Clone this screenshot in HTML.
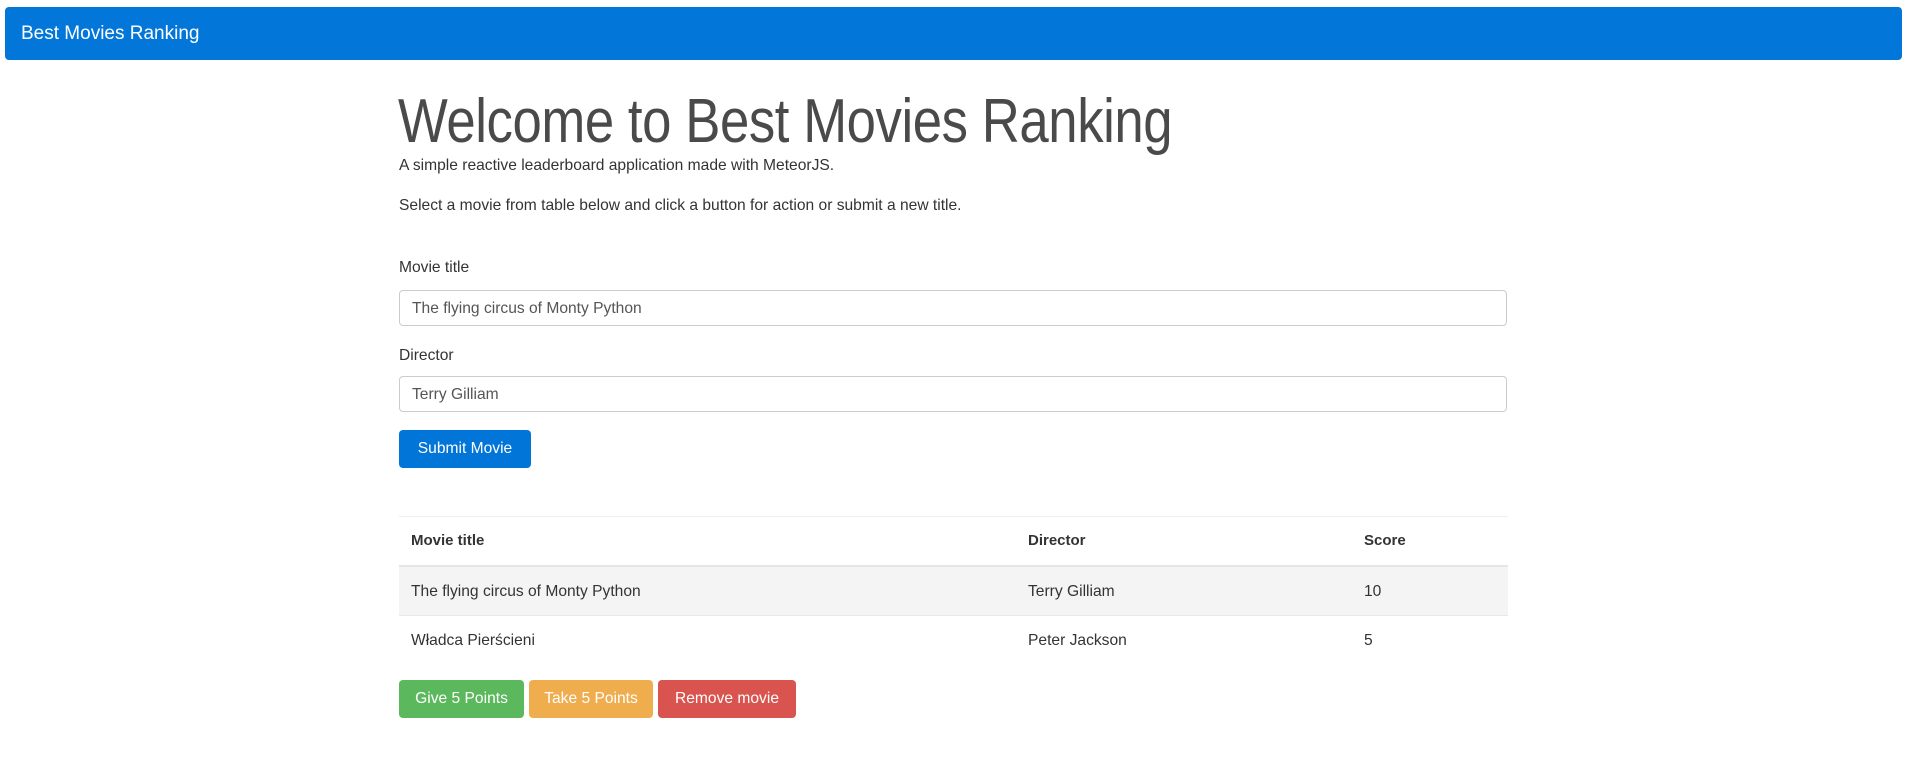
<!DOCTYPE html>
<html><head><meta charset="utf-8"><style>
body{margin:0;width:1912px;height:766px;background:#fff;font-family:"Liberation Sans",sans-serif;color:#333;position:relative;overflow:hidden}
.a{position:absolute;white-space:nowrap}
.nav{left:5px;top:7px;width:1897px;height:53px;background:#0277d9;border-radius:4px}
.nav span{position:absolute;left:16px;top:16px;color:#fff;font-size:19px}
h1{margin:0;font-weight:300;font-size:62px;left:398px;top:86px;color:#4a4a4a;letter-spacing:-0.5px;transform:scaleX(0.85);transform-origin:0 0}
.t{font-size:15.6px}
.inp{left:399px;width:1108px;height:36px;border:1px solid #ccc;border-radius:4px;box-sizing:border-box}
.inp span{position:absolute;left:12px;top:9px;font-size:15.6px;color:#555}
.btn{height:38px;border-radius:4px;color:#fff;font-size:15.6px;text-align:center;line-height:38px}
.row{left:399px;width:1109px}
.th{font-weight:bold;font-size:15px}
</style></head><body>
<div class="a nav"><span>Best Movies Ranking</span></div>
<h1 class="a">Welcome to Best Movies Ranking</h1>
<div class="a t" style="left:399px;top:157px">A simple reactive leaderboard application made with MeteorJS.</div>
<div class="a t" style="left:399px;top:197px">Select a movie from table below and click a button for action or submit a new title.</div>
<div class="a t" style="left:399px;top:259px">Movie title</div>
<div class="a inp" style="top:290px"><span>The flying circus of Monty Python</span></div>
<div class="a t" style="left:399px;top:347px">Director</div>
<div class="a inp" style="top:376px"><span>Terry Gilliam</span></div>
<div class="a btn" style="left:399px;top:430px;width:132px;background:#0275d8">Submit Movie</div>
<div class="a row" style="top:516px;height:1px;background:#eceeef"></div>
<div class="a th" style="left:411px;top:532px">Movie title</div>
<div class="a th" style="left:1028px;top:532px">Director</div>
<div class="a th" style="left:1364px;top:532px">Score</div>
<div class="a row" style="top:565px;height:2px;background:#e6e6e6"></div>
<div class="a row" style="top:567px;height:48px;background:#f4f4f4"></div>
<div class="a row" style="top:615px;height:1px;background:#e8e8e8"></div>
<div class="a t" style="left:411px;top:583px">The flying circus of Monty Python</div>
<div class="a t" style="left:1028px;top:583px">Terry Gilliam</div>
<div class="a t" style="left:1364px;top:583px">10</div>
<div class="a t" style="left:411px;top:632px">Władca Pierścieni</div>
<div class="a t" style="left:1028px;top:632px">Peter Jackson</div>
<div class="a t" style="left:1364px;top:632px">5</div>
<div class="a btn" style="left:399px;top:680px;width:125px;background:#5cb85c">Give 5 Points</div>
<div class="a btn" style="left:529px;top:680px;width:124px;background:#f0ad4e">Take 5 Points</div>
<div class="a btn" style="left:658px;top:680px;width:138px;background:#d9534f">Remove movie</div>
</body></html>
